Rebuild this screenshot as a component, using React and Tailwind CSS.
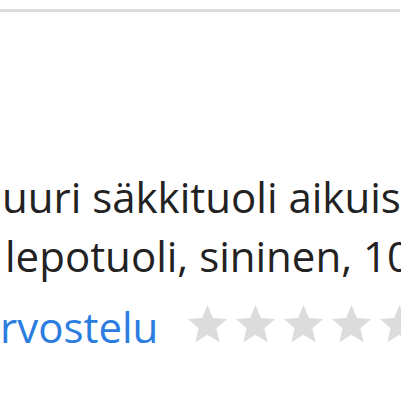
import React from "react";

const Star = () => (
  <svg viewBox="0 0 24 24" className="w-[47px] h-[47px] shrink-0" fill="#dcdcdc">
    <path d="M12 17.27L18.18 21l-1.64-7.03L22 9.24l-7.19-.61L12 2 9.19 8.63 2 9.24l5.46 4.73L5.82 21z" />
  </svg>
);

const App = () => {
  return (
    <div className="w-[401px] h-[401px] bg-white overflow-hidden" style={{ fontFamily: '"Open Sans", sans-serif' }}>
      {/* top divider */}
      <div className="pt-[9px] pr-[1px]">
        <div className="h-[3px] bg-[#dcdcdc]" />
      </div>

      {/* product title */}
      <div className="mt-[155px] pl-[2px] text-[42px] leading-[59px] text-[#222222] whitespace-nowrap">
        <div>uuri säkkituoli aikuisille</div>
        <div className="pl-[3px]">lepotuoli, sininen, 100 x 110 cm</div>
      </div>

      {/* rating row */}
      <div className="mt-[12px] flex items-center whitespace-nowrap">
        <span className="text-[42px] leading-[59px] text-[#2b7de0]">rvostelu</span>
        <div className="flex items-center gap-[1px] ml-[26px] mb-[5px]">
          <Star />
          <Star />
          <Star />
          <Star />
          <Star />
        </div>
      </div>
    </div>
  );
};

export default App;
